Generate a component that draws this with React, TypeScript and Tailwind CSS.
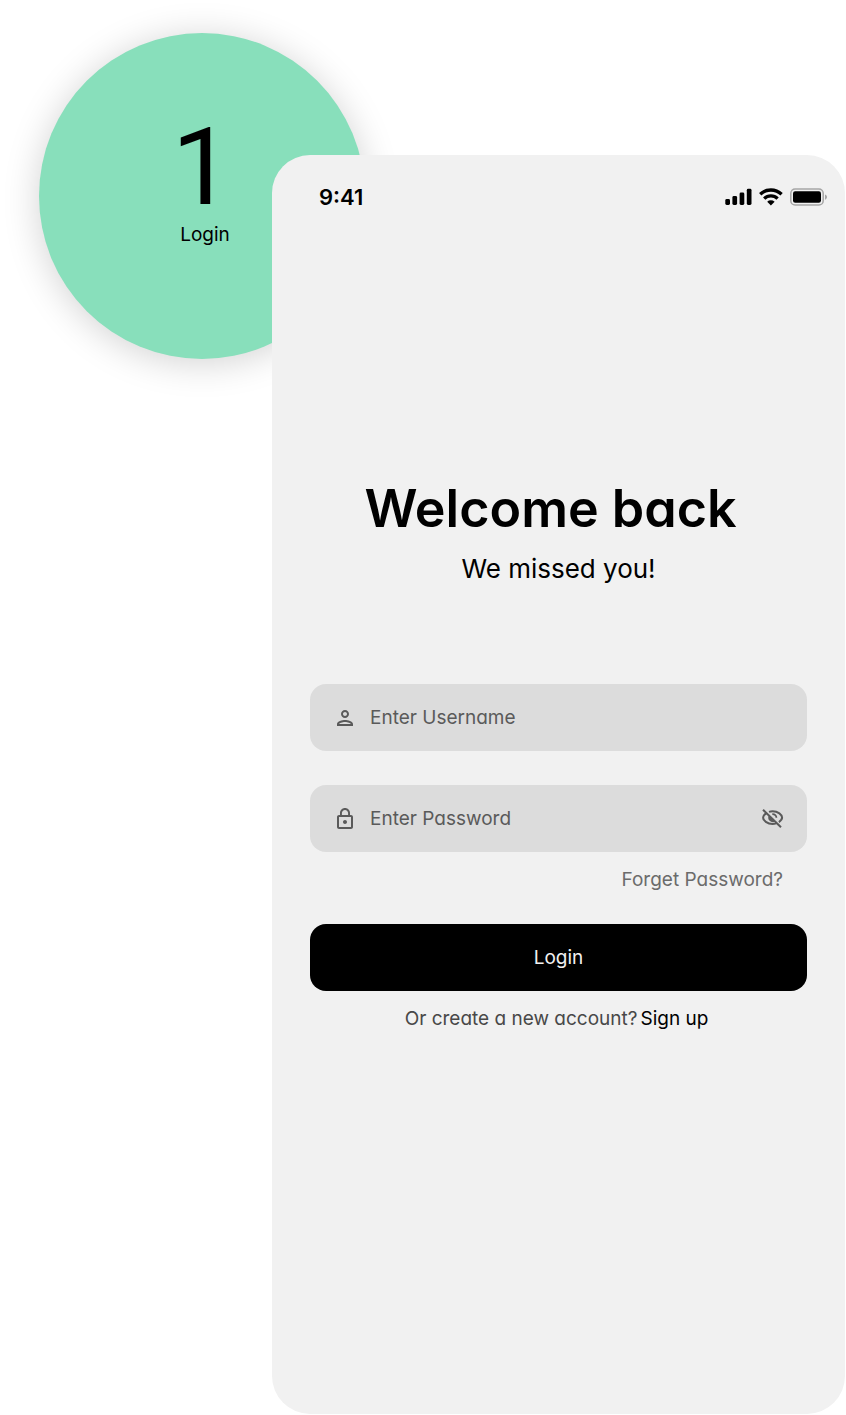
import { useState } from "react";
import { MdOutlinePerson, MdLockOutline } from "react-icons/md";

function StatusIcons() {
  return (
    <svg width="104" height="20" viewBox="0 0 104 20" role="img" aria-label="Signal, Wi-Fi and battery">
      <rect x="0.3" y="12" width="4.7" height="6" rx="1.4" />
      <rect x="7.4" y="9" width="4.7" height="9" rx="1.4" />
      <rect x="14.6" y="5.5" width="4.7" height="12.5" rx="1.4" />
      <rect x="21.8" y="1.8" width="4.7" height="16.2" rx="1.4" />
      <g fill="none" stroke="black" strokeWidth="3.3">
        <path d="M35.2 7.3a15.4 15.4 0 0 1 21.4 0" />
        <path d="M39.2 11.6a9.6 9.6 0 0 1 13.4 0" />
      </g>
      <path d="M42.2 14.8a5.4 5.4 0 0 1 7.4 0L45.9 18.4Z" />
      <rect x="65.8" y="2" width="32.4" height="16" rx="4.3" fill="none" stroke="#a6a6a6" strokeWidth="1.5" />
      <rect x="68" y="4.2" width="28" height="11.6" rx="2.2" />
      <path d="M100 7.5c2.7 1 2.7 4.2 0 5.2Z" fill="#a6a6a6" />
    </svg>
  );
}

function EyeOff() {
  return (
    <svg width="24" height="24" viewBox="-1 1 24 24" fill="none" stroke="currentColor" strokeWidth="2" aria-hidden="true">
      <path d="M5.8 6.8C3.4 8.300 2.1 10.300 2.1 11.800c0 2.600 4.100 6.200 9.500 6.200 1.300 0 2.500-.2 3.600-.6" />
      <path d="M8 5.900c1.100-.4 2.300-.6 3.600-.6 5.400 0 9.500 3.500 9.500 6.300 0 1.500-1.200 3.200-3.200 4.500" />
      <path d="M11.300 8.200c2.500-.1 4.100 1.400 4.100 3.600" strokeWidth="1.800" />
      <path d="M7.800 9.500 14 15.700A4.600 4.600 0 0 1 7.800 9.500Z" fill="currentColor" stroke="none" />
      <path d="M2 3.700 20 21.200" />
    </svg>
  );
}

export default function App() {
  const [visible, setVisible] = useState(false);
  const field = "flex h-[67px] items-center gap-[13px] rounded-2xl bg-[#dcdcdc] px-[23px] text-[#5a5a5a]";
  const input = "min-w-0 flex-1 bg-transparent text-[19px] leading-8 outline-none placeholder:text-[#5a5a5a]";
  return (
    <div className="relative min-h-screen overflow-hidden bg-white pt-[155px] pl-[272px] text-black [font-family:Inter,'Open_Sans',sans-serif]">
      <div className="absolute top-[33px] left-[39px] flex size-[326px] flex-col items-center rounded-full bg-[#88dfbb] pt-[94px] pl-1.5 shadow-[0_4px_36px_rgba(0,0,0,0.18)]">
        <span className="pr-1.5 text-[108px] leading-[80px] [font-family:Roboto,sans-serif]">1</span>
        <span className="mt-3.5 text-[19px] leading-7">Login</span>
      </div>
      <main className="relative mr-px mb-px min-h-[1259px] rounded-[38px] bg-[#f1f1f1] px-[38px] pb-20">
        <header className="-mr-[22px] flex items-center justify-between pt-[26px] pl-[9px]">
          <time className="text-[22px] leading-8 font-semibold">9:41</time>
          <StatusIcons />
        </header>
        <section className="pt-[262px] text-center">
          <h1 className="pr-4 text-[52px] leading-[68px] font-semibold [font-feature-settings:'cv11']">Welcome back</h1>
          <p className="text-[26px] leading-[52px] [font-feature-settings:'cv11']">We missed you!</p>
        </section>
        <form className="pt-[89px] [font-feature-settings:'cv11']" onSubmit={(e) => e.preventDefault()}>
          <div className={field}>
            <label htmlFor="username" aria-label="Username"><MdOutlinePerson size={24} /></label>
            <input id="username" className={input} placeholder="Enter Username" />
          </div>
          <div className={field + " mt-[34px]"}>
            <label htmlFor="password" aria-label="Password"><MdLockOutline size={24} /></label>
            <input id="password" type={visible ? "text" : "password"} className={input} placeholder="Enter Password" />
            <button type="button" aria-label="Show password" onClick={() => setVisible(!visible)}>
              <EyeOff />
            </button>
          </div>
          <div className="flex justify-end pt-3 pr-6">
            <a href="#forgot" className="text-[19px] leading-8 text-[#6b6b6b]">Forget Password?</a>
          </div>
          <button type="submit" className="mt-7 block h-[67px] w-full rounded-2xl bg-black text-[19px] leading-8 text-[#f1f1f1]">Login</button>
          <p className="flex justify-center gap-[3px] pt-3 pr-1 text-[19px] leading-8 text-[#484848]">
            <span>Or create a new account?</span>
            <a href="#signup" className="text-black">Sign up</a>
          </p>
        </form>
      </main>
    </div>
  );
}
